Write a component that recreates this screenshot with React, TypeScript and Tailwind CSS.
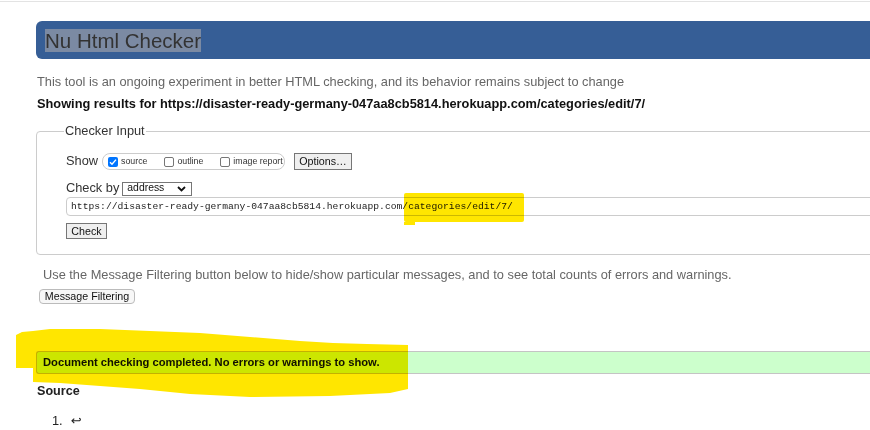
import React from "react";

const sans = { fontFamily: '"Liberation Sans", Arial, sans-serif' };

function Box({ checked }: { checked?: boolean }) {
  if (checked) {
    return (
      <span className="flex h-[10px] w-[10px] items-center justify-center rounded-[2px] bg-[#0075ff]">
        <svg width="8" height="8" viewBox="0 0 8 8">
          <polyline points="1,4.2 3,6.2 7,1.6" fill="none" stroke="#fff" strokeWidth="1.4" />
        </svg>
      </span>
    );
  }
  return <span className="h-[10px] w-[10px] rounded-[2px] border border-[#767676] bg-white" />;
}

function Option({ label, checked }: { label: string; checked?: boolean }) {
  return (
    <label className="flex items-center gap-[3px]">
      <Box checked={checked} />
      <span className="text-[8.8px] leading-none text-[#333]">{label}</span>
    </label>
  );
}

export default function App() {
  return (
    <div className="relative h-[430px] w-[870px] overflow-hidden bg-white text-[#222]" style={sans}>
      <div className="mt-px h-px bg-[#e3e3e3]" />

      <div className="w-[960px] pl-[36px]">
        {/* Header */}
        <h1 className="mt-[19px] flex h-[38px] items-center rounded-l-[6px] bg-[#365e96] pl-[9px]">
          <span className="bg-[#7b8aa3] text-[20.5px] font-normal leading-[23px] text-[#333]">Nu Html Checker</span>
        </h1>

        <p className="mt-[15px] pl-px text-[12.8px] leading-[16px] text-[#666]">
          This tool is an ongoing experiment in better HTML checking, and its behavior remains subject to change
        </p>
        <p className="mt-[6px] pl-px text-[12.8px] font-bold leading-[16px] text-[#111]">
          Showing results for https://disaster-ready-germany-047aa8cb5814.herokuapp.com/categories/edit/7/
        </p>

        {/* Checker input */}
        <fieldset className="mt-[11px] rounded-[4px] border border-[#cccccc] pb-[15px] pl-[29px]">
          <legend className="-ml-[2px] px-px text-[12.8px] leading-[16px] text-[#333]">Checker Input</legend>

          <div className="mt-[14px] flex h-[17px] items-center">
            <span className="text-[12.8px] leading-none text-[#333]">Show</span>
            <div className="ml-[4px] flex h-[17px] w-[183px] items-center gap-[17px] rounded-[8px] border border-[#cccccc] pl-[5px]">
              <Option label="source" checked />
              <Option label="outline" />
              <Option label="image report" />
            </div>
            <button className="ml-[9px] h-[17px] w-[58px] border border-[#767676] bg-[#efefef] text-[10.7px] leading-none text-[#111]">
              Options…
            </button>
          </div>

          <div className="mt-[11px] flex h-[15px] items-center">
            <span className="text-[12.8px] leading-none text-[#333]">Check by</span>
            <div className="ml-[3px] flex h-[14px] w-[70px] items-center justify-between border border-[#767676] bg-white pl-[4px] pr-[5px]">
              <span className="text-[10.4px] leading-none text-[#111]">address</span>
              <svg width="9" height="6" viewBox="0 0 9 6">
                <polyline points="1,1 4.5,4.5 8,1" fill="none" stroke="#111" strokeWidth="1.8" />
              </svg>
            </div>
          </div>

          <div className="mt-[1px] flex h-[19px] items-center rounded-[4px] border border-[#cccccc] bg-white pl-[4px]">
            <span className="text-[9.7px] leading-none text-[#222]" style={{ fontFamily: '"Liberation Mono", "DejaVu Sans Mono", monospace' }}>
              https://disaster-ready-germany-047aa8cb5814.herokuapp.com/categories/edit/7/
            </span>
          </div>

          <button className="mt-[7px] flex h-[16px] w-[41px] items-center justify-center border border-[#767676] bg-[#efefef] text-[10.7px] leading-none text-[#111]">
            Check
          </button>
        </fieldset>

        <p className="ml-[7px] mt-[13px] text-[12.8px] leading-[14px] text-[#666]">
          Use the Message Filtering button below to hide/show particular messages, and to see total counts of errors and warnings.
        </p>
        <button className="ml-[3px] mt-[7px] flex h-[15px] w-[96px] items-center justify-center rounded-[4px] border border-[#bbbbbb] bg-[#f7f7f7] text-[10.7px] leading-none text-[#111]">
          Message Filtering
        </button>

        {/* Result */}
        <div className="mt-[47px] flex h-[23px] items-center rounded-l-[3px] border border-r-0 border-[#c4c4c4] bg-[#ccffcc] pl-[6px]">
          <span className="text-[11.2px] font-bold leading-none text-[#111]">
            Document checking completed. No errors or warnings to show.
          </span>
        </div>

        <h2 className="ml-px mt-[10px] text-[12.6px] font-bold leading-[15px] text-[#222]">Source</h2>

        <ol className="ml-[16px] mt-[15px] text-[12.8px] leading-[14px] text-[#222]">
          <li className="flex items-center gap-[8px]">
            <span>1.</span>
            <span style={{ fontFamily: '"DejaVu Sans", sans-serif' }} className="text-[13px] leading-[14px]">↩</span>
          </li>
          <li className="flex items-center gap-[8px]">
            <span>2.</span>
            <span style={{ fontFamily: '"DejaVu Sans", sans-serif' }} className="text-[13px] leading-[14px]">↩</span>
          </li>
        </ol>
      </div>

      {/* Yellow marker strokes over the screenshot */}
      <div className="pointer-events-none absolute left-[404px] top-[193px] h-[29px] w-[120px] rounded-[2px] bg-[#ffe600] mix-blend-multiply" />
      <div className="pointer-events-none absolute left-[404px] top-[222px] h-[3px] w-[11px] bg-[#ffe600] mix-blend-multiply" />
      <svg className="pointer-events-none absolute left-0 top-[320px] mix-blend-multiply" width="420" height="85" viewBox="0 0 420 85">
        <polygon
          fill="#ffe600"
          points="16,15 22,12 33,11 50,9 100,9 150,11 200,13 250,17 300,21 333,23 367,24 408,25 408,69 390,73 330,76 250,77 190,74 140,69 100,66 60,63 33,62 33,48 16,48"
        />
      </svg>
    </div>
  );
}
